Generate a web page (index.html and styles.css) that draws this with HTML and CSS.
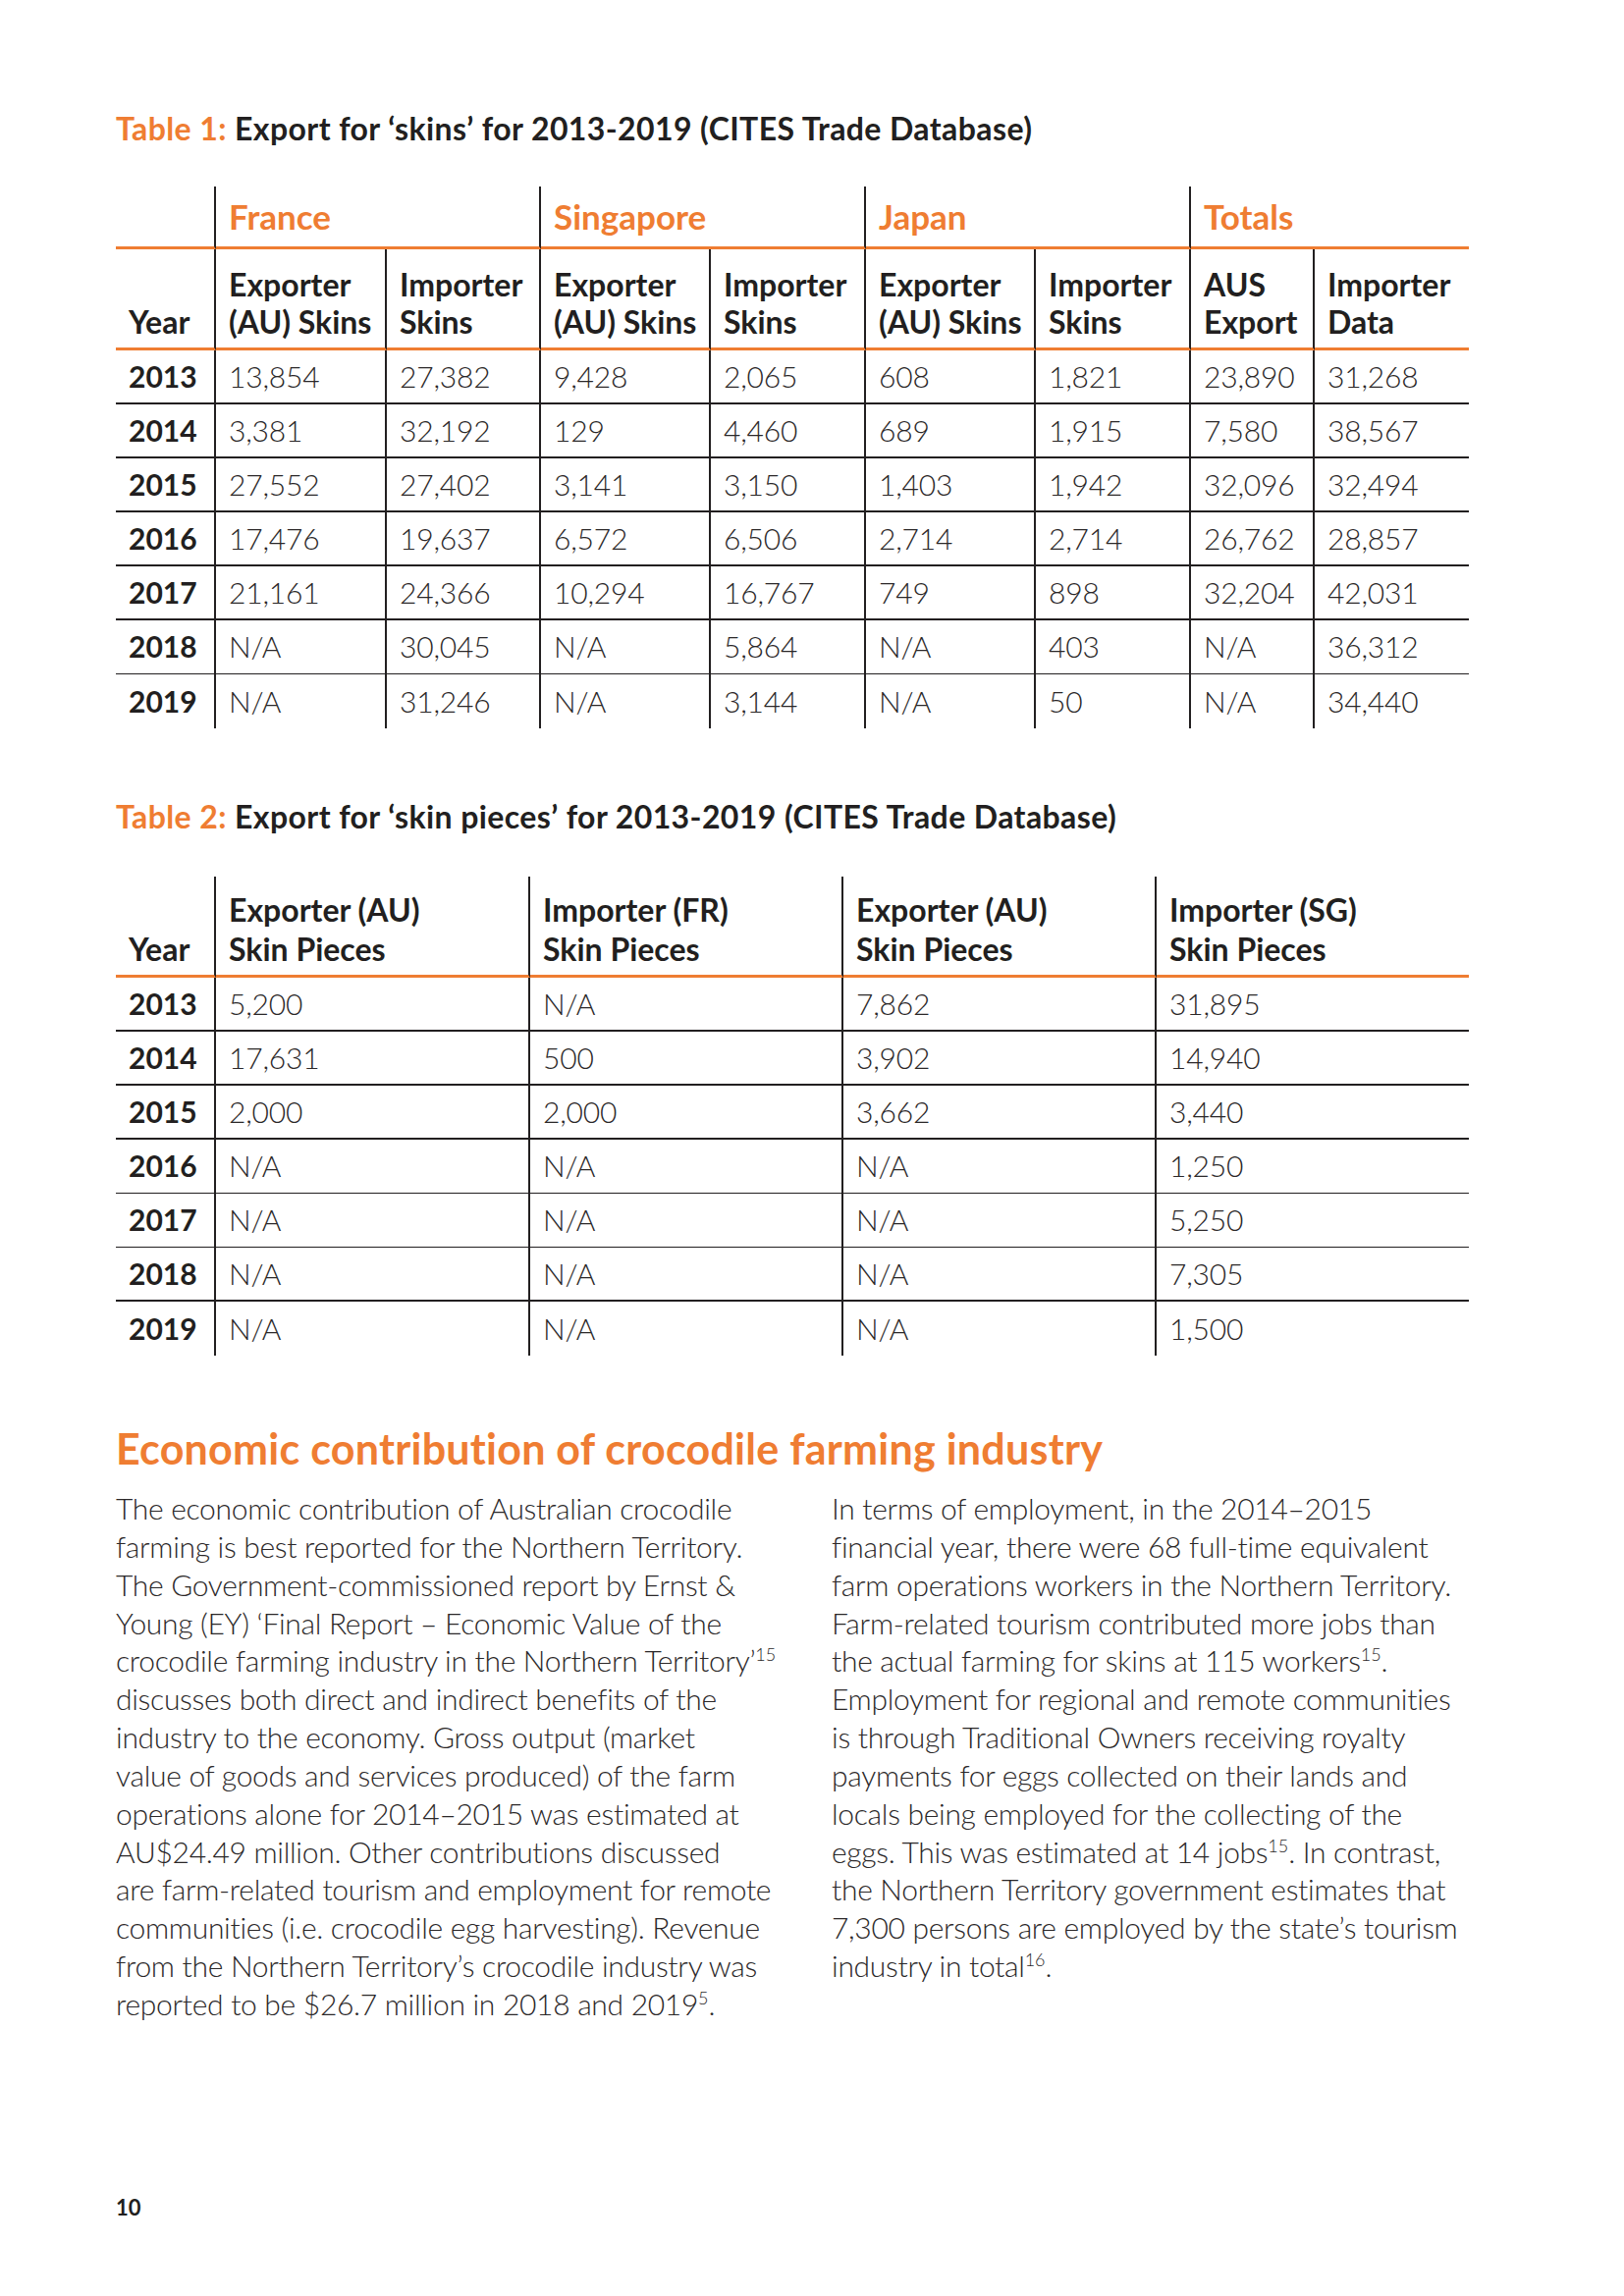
FILE: index.html
```html
<!DOCTYPE html>
<html lang="en">
<head>
<meta charset="utf-8">
<title>Economic contribution of crocodile farming industry</title>
<link rel="stylesheet" href="styles.css">
</head>
<body>
<div class="page">
  <h2 class="caption caption-first"><span class="accent">Table 1:</span> Export for ‘skins’ for 2013-2019 (CITES Trade Database)</h2>
  <table class="data t1">
    <colgroup>
      <col class="w-year"><col class="w174"><col class="w157"><col class="w173"><col class="w158"><col class="w173"><col class="w158"><col class="w126"><col class="w157">
    </colgroup>
    <thead>
      <tr class="groups">
        <th class="year"></th>
        <th colspan="2" class="group">France</th>
        <th colspan="2" class="group">Singapore</th>
        <th colspan="2" class="group">Japan</th>
        <th colspan="2" class="group last">Totals</th>
      </tr>
      <tr class="heads">
        <th class="year">Year</th>
        <th>Exporter<br>(AU) Skins</th>
        <th>Importer<br>Skins</th>
        <th>Exporter<br>(AU) Skins</th>
        <th>Importer<br>Skins</th>
        <th>Exporter<br>(AU) Skins</th>
        <th>Importer<br>Skins</th>
        <th>AUS<br>Export</th>
        <th class="last">Importer<br>Data</th>
      </tr>
    </thead>
    <tbody>
      <tr><th class="year">2013</th><td>13,854</td><td>27,382</td><td>9,428</td><td>2,065</td><td>608</td><td>1,821</td><td>23,890</td><td class="last">31,268</td></tr>
      <tr><th class="year">2014</th><td>3,381</td><td>32,192</td><td>129</td><td>4,460</td><td>689</td><td>1,915</td><td>7,580</td><td class="last">38,567</td></tr>
      <tr><th class="year">2015</th><td>27,552</td><td>27,402</td><td>3,141</td><td>3,150</td><td>1,403</td><td>1,942</td><td>32,096</td><td class="last">32,494</td></tr>
      <tr><th class="year">2016</th><td>17,476</td><td>19,637</td><td>6,572</td><td>6,506</td><td>2,714</td><td>2,714</td><td>26,762</td><td class="last">28,857</td></tr>
      <tr><th class="year">2017</th><td>21,161</td><td>24,366</td><td>10,294</td><td>16,767</td><td>749</td><td>898</td><td>32,204</td><td class="last">42,031</td></tr>
      <tr class="thin"><th class="year">2018</th><td>N/A</td><td>30,045</td><td>N/A</td><td>5,864</td><td>N/A</td><td>403</td><td>N/A</td><td class="last">36,312</td></tr>
      <tr class="final"><th class="year">2019</th><td>N/A</td><td>31,246</td><td>N/A</td><td>3,144</td><td>N/A</td><td>50</td><td>N/A</td><td class="last">34,440</td></tr>
    </tbody>
  </table>

  <h2 class="caption caption-second"><span class="accent">Table 2:</span> Export for ‘skin pieces’ for 2013-2019 (CITES Trade Database)</h2>
  <table class="data t2">
    <colgroup>
      <col class="w-year"><col class="w320"><col class="w319"><col class="w319"><col class="w318">
    </colgroup>
    <thead>
      <tr class="heads heads-t2">
        <th class="year">Year</th>
        <th>Exporter (AU)<br>Skin Pieces</th>
        <th>Importer (FR)<br>Skin Pieces</th>
        <th>Exporter (AU)<br>Skin Pieces</th>
        <th class="last">Importer (SG)<br>Skin Pieces</th>
      </tr>
    </thead>
    <tbody>
      <tr><th class="year">2013</th><td>5,200</td><td>N/A</td><td>7,862</td><td class="last">31,895</td></tr>
      <tr><th class="year">2014</th><td>17,631</td><td>500</td><td>3,902</td><td class="last">14,940</td></tr>
      <tr><th class="year">2015</th><td>2,000</td><td>2,000</td><td>3,662</td><td class="last">3,440</td></tr>
      <tr class="thin"><th class="year">2016</th><td>N/A</td><td>N/A</td><td>N/A</td><td class="last">1,250</td></tr>
      <tr class="thin"><th class="year">2017</th><td>N/A</td><td>N/A</td><td>N/A</td><td class="last">5,250</td></tr>
      <tr><th class="year">2018</th><td>N/A</td><td>N/A</td><td>N/A</td><td class="last">7,305</td></tr>
      <tr class="final"><th class="year">2019</th><td>N/A</td><td>N/A</td><td>N/A</td><td class="last">1,500</td></tr>
    </tbody>
  </table>

  <h1 class="section-title">Economic contribution of crocodile farming industry</h1>
  <div class="columns">
    <p class="body">The economic contribution of Australian crocodile<br>farming is best reported for the Northern Territory.<br>The Government-commissioned report by Ernst &amp;<br>Young (EY) ‘Final Report – Economic Value of the<br>crocodile farming industry in the Northern Territory’<sup>15</sup><br>discusses both direct and indirect benefits of the<br>industry to the economy. Gross output (market<br>value of goods and services produced) of the farm<br>operations alone for 2014–2015 was estimated at<br>AU$24.49 million. Other contributions discussed<br>are farm-related tourism and employment for remote<br>communities (i.e. crocodile egg harvesting). Revenue<br>from the Northern Territory’s crocodile industry was<br>reported to be $26.7 million in 2018 and 2019<sup>5</sup>.</p>
    <p class="body">In terms of employment, in the 2014–2015<br>financial year, there were 68 full-time equivalent<br>farm operations workers in the Northern Territory.<br>Farm-related tourism contributed more jobs than<br>the actual farming for skins at 115 workers<sup>15</sup>.<br>Employment for regional and remote communities<br>is through Traditional Owners receiving royalty<br>payments for eggs collected on their lands and<br>locals being employed for the collecting of the<br>eggs. This was estimated at 14 jobs<sup>15</sup>. In contrast,<br>the Northern Territory government estimates that<br>7,300 persons are employed by the state’s tourism<br>industry in total<sup>16</sup>.</p>
  </div>

  <div class="folio">10</div>
</div>
</body>
</html>
```

FILE: styles.css
```css
* { box-sizing: border-box; }

html, body {
  margin: 0;
  padding: 0;
  background: #ffffff;
}

body {
  font-family: Lato, "Noto Sans", "Liberation Sans", sans-serif;
  color: #221f20;
}

.page {
  width: 1654px;
  min-height: 2339px;
  padding: 0 158px 0 118px;
}

.accent { color: #ef7d32; }

.caption {
  margin: 0;
  font-size: 32px;
  line-height: 40px;
  font-weight: 700;
  letter-spacing: 0.4px;
  white-space: nowrap;
}

.caption-first { margin-top: 111px; margin-bottom: 39px; }
.caption-second { margin-top: 70px; margin-bottom: 41px; }

.data {
  width: 1378px;
  table-layout: fixed;
  border-collapse: separate;
  border-spacing: 0;
}

.w-year { width: 102px; }
.w126 { width: 126px; }
.w157 { width: 157px; }
.w158 { width: 158px; }
.w173 { width: 173px; }
.w174 { width: 174px; }
.w318 { width: 318px; }
.w319 { width: 319px; }
.w320 { width: 320px; }

.data th,
.data td {
  padding: 0 10px 0 13px;
  border-right: 2px solid #221f20;
  text-align: left;
  white-space: nowrap;
}

.data .last { border-right: none; }

.groups th {
  height: 64px;
  border-bottom: 3px solid #ef7d32;
  vertical-align: middle;
  font-size: 35px;
  line-height: 42px;
  font-weight: 700;
  color: #ef7d32;
  padding-bottom: 2px;
}

.heads th {
  height: 103px;
  border-bottom: 3px solid #ef7d32;
  vertical-align: bottom;
  font-size: 32px;
  line-height: 38px;
  font-weight: 700;
  padding-bottom: 7px;
}

.heads-t2 th {
  line-height: 40px;
  padding-bottom: 6px;
}

.data tbody th,
.data tbody td {
  height: 55px;
  border-bottom: 2px solid #221f20;
  vertical-align: middle;
  font-size: 30px;
  line-height: 36px;
  padding-bottom: 2px;
}

.data tbody th { font-weight: 700; }
.data tbody td { font-weight: 300; color: #2b2829; letter-spacing: -0.2px; }

.data tbody tr.thin th,
.data tbody tr.thin td { border-bottom-width: 1px; }

.data tbody tr.final th,
.data tbody tr.final td { border-bottom: none; }

.section-title {
  margin: 70px 0 16px;
  font-size: 43px;
  line-height: 50px;
  font-weight: 700;
  letter-spacing: 0.25px;
  color: #ef7d32;
  white-space: nowrap;
}

.columns {
  display: grid;
  grid-template-columns: 649px 649px;
  column-gap: 80px;
}

.body {
  margin: 0;
  font-size: 30px;
  line-height: 38.85px;
  font-weight: 300;
  letter-spacing: -0.3px;
  white-space: nowrap;
  color: #2b2829;
}

.body sup {
  font-size: 18px;
  line-height: 0;
  letter-spacing: 0;
  vertical-align: 11px;
}

.folio {
  margin-top: 175px;
  font-size: 22px;
  line-height: 26px;
  font-weight: 700;
}
```
